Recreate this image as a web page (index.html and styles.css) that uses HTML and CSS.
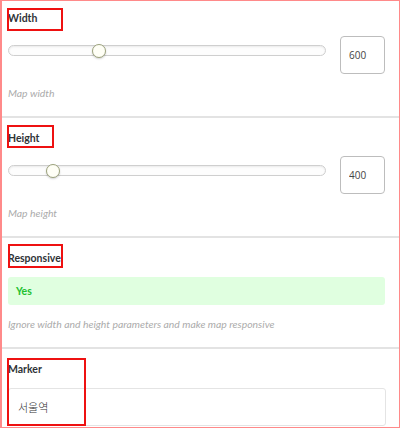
FILE: index.html
```html
<!DOCTYPE html>
<html lang="en">
<head>
<meta charset="utf-8">
<title>Map settings</title>
<link rel="stylesheet" href="styles.css">
</head>
<body>
<div class="panel">
  <section class="field first">
    <label class="label" for="w">Width</label>
    <div class="row">
      <input class="range" type="range" min="240" max="1550" value="600">
      <input class="num" id="w" type="text" value="600">
    </div>
    <p class="help">Map width</p>
  </section>
  <section class="field">
    <label class="label" for="h">Height</label>
    <div class="row">
      <input class="range" type="range" min="240" max="1550" value="400">
      <input class="num" id="h" type="text" value="400">
    </div>
    <p class="help">Map height</p>
  </section>
  <section class="field">
    <div class="label">Responsive</div>
    <div class="toggle">Yes</div>
    <p class="help">Ignore width and height parameters and make map responsive</p>
  </section>
  <section class="field last">
    <label class="label" for="m">Marker</label>
    <input class="text" id="m" type="text" value="서울역">
  </section>

  <div class="mark mark-width"></div>
  <div class="mark mark-height"></div>
  <div class="mark mark-resp"></div>
  <div class="mark mark-marker"></div>
</div>
</body>
</html>
```

FILE: styles.css
```css
* { box-sizing: border-box; }

html, body {
  margin: 0;
  padding: 0;
  background: #fff;
}

body {
  font-family: Lato, "Noto Sans", sans-serif;
  color: #333;
}

.panel {
  position: relative;
  width: 400px;
  height: 428px;
  overflow: hidden;
  border: 1px solid #ff8a8a;
  border-left-width: 2px;
  background: #fff;
}

.field {
  padding: 9px 14px 16px 6px;
  border-bottom: 2px solid #e3e3e3;
}

.field.first { padding-top: 6px; }

.field.last {
  border-bottom: none;
  padding-bottom: 0;
}

.label {
  display: block;
  font-weight: 700;
  font-size: 10.5px;
  line-height: 22px;
  color: #2f3337;
}

.row {
  display: flex;
  align-items: flex-start;
  gap: 14px;
  margin-top: 7px;
}

.range {
  -webkit-appearance: none;
  appearance: none;
  flex: 1;
  min-width: 0;
  height: 11px;
  margin: 9px 0 0 0;
  padding: 0;
  border: 1px solid #cfcfcf;
  border-radius: 6px;
  background: #fdfdfd;
  box-shadow: inset 0 1px 2px rgba(0, 0, 0, 0.08);
  outline: none;
}

.range::-webkit-slider-thumb {
  -webkit-appearance: none;
  appearance: none;
  width: 14px;
  height: 14px;
  border-radius: 50%;
  background: #fffff6;
  border: 1px solid #9ca27c;
  box-shadow: 0 1px 2px rgba(0, 0, 0, 0.18);
}

.num {
  width: 45px;
  height: 38px;
  margin: 0;
  padding: 0 0 0 8px;
  border: 1px solid #bdbdbd;
  border-radius: 4px;
  font-family: "Open Sans", Lato, sans-serif;
  font-size: 10px;
  color: #444;
  background: #fff;
  outline: none;
}

.help {
  margin: 12px 0 0 0;
  font-style: italic;
  font-size: 10.4px;
  line-height: 14px;
  color: #ababab;
}

.toggle {
  margin-top: 8px;
  height: 28px;
  line-height: 28px;
  padding-left: 8px;
  border-radius: 3px;
  background: #e0ffe0;
  color: #22c12f;
  font-weight: 700;
  font-size: 10.5px;
}

.text {
  display: block;
  width: calc(100% + 1px);
  height: 38px;
  margin-top: 8px;
  padding: 0 0 0 9px;
  border: 1px solid #e4e4e4;
  border-radius: 3px;
  font-family: "Noto Sans CJK KR", "Noto Sans", sans-serif;
  font-size: 11px;
  font-weight: 300;
  color: #333;
  background: #fff;
  outline: none;
}

/* annotation highlight boxes */
.mark {
  position: absolute;
  border: 2px solid #ee1111;
  pointer-events: none;
}

.mark-width { left: 5px; top: 7px; width: 56px; height: 23px; }
.mark-height { left: 5px; top: 124px; width: 47px; height: 23px; }
.mark-resp { left: 6px; top: 243px; width: 55px; height: 24px; }
.mark-marker { left: 5px; top: 357px; width: 79px; height: 68px; }
```
